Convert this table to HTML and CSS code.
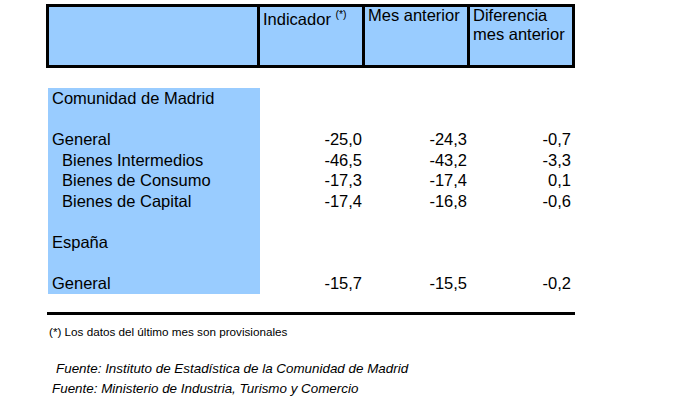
FILE: index.html
```html
<!DOCTYPE html>
<html lang="es">
<head>
<meta charset="utf-8">
<title>Indicador</title>
<link rel="stylesheet" href="styles.css">
</head>
<body>
<div class="page">
  <div class="head">
    <div class="hc"></div>
    <div class="hc ind"><div class="ht">Indicador <sup class="ast">(*)</sup></div></div>
    <div class="hc"><div class="ht">Mes anterior</div></div>
    <div class="hc"><div class="ht">Diferencia<br>mes anterior</div></div>
  </div>

  <div class="data">
    <div class="lab">Comunidad de Madrid</div><div></div><div></div><div></div>
    <div class="lab">&nbsp;</div><div></div><div></div><div></div>
    <div class="lab">General</div><div class="num">-25,0</div><div class="num">-24,3</div><div class="num">-0,7</div>
    <div class="lab sub">Bienes Intermedios</div><div class="num">-46,5</div><div class="num">-43,2</div><div class="num">-3,3</div>
    <div class="lab sub">Bienes de Consumo</div><div class="num">-17,3</div><div class="num">-17,4</div><div class="num">0,1</div>
    <div class="lab sub">Bienes de Capital</div><div class="num">-17,4</div><div class="num">-16,8</div><div class="num">-0,6</div>
    <div class="lab">&nbsp;</div><div></div><div></div><div></div>
    <div class="lab">España</div><div></div><div></div><div></div>
    <div class="lab">&nbsp;</div><div></div><div></div><div></div>
    <div class="lab">General</div><div class="num">-15,7</div><div class="num">-15,5</div><div class="num">-0,2</div>
  </div>

  <div class="rule"></div>

  <p class="note">(*) Los datos del último mes son provisionales</p>
  <p class="src src1">Fuente: Instituto de Estadística de la Comunidad de Madrid</p>
  <p class="src src2">Fuente: Ministerio de Industria, Turismo y Comercio</p>
</div>
</body>
</html>
```

FILE: styles.css
```css
html, body {
  margin: 0;
  padding: 0;
  background: #ffffff;
}

body {
  font-family: "Liberation Sans", Arial, sans-serif;
  color: #000000;
}

.page {
  padding-top: 4px;
  width: 683px;
  height: 411px;
  box-sizing: border-box;
  overflow: hidden;
}

.head {
  margin-left: 46px;
  width: 529px;
  box-sizing: border-box;
  display: grid;
  grid-template-columns: 208px 102px 102px 102px;
  grid-template-rows: 58px;
  gap: 3px;
  padding: 3px;
  background: #000000;
}

.hc {
  background: #99ccff;
  padding: 0 0 0 3px;
  font-size: 16.5px;
  line-height: 19px;
}

.hc.ind {
  padding-top: 4px;
}

.ht {
  margin-top: -1px;
  white-space: nowrap;
}

.ast {
  font-size: 10.5px;
  line-height: 0;
  vertical-align: 7px;
  margin-left: 0;
}

.data {
  margin-top: 20px;
  margin-left: 48px;
  display: grid;
  grid-template-columns: 212px 102px 105px 104px;
  grid-auto-rows: 20.6px;
  font-size: 16.5px;
  line-height: 20.6px;
  background: linear-gradient(to right, #99ccff 212px, transparent 212px);
  width: 523px;
}

.lab {
  padding-left: 4px;
  white-space: nowrap;
}

.lab.sub {
  padding-left: 14px;
}

.num {
  text-align: right;
}

.rule {
  margin-top: 18px;
  margin-left: 47px;
  width: 528px;
  height: 3px;
  background: #000000;
}

.note {
  margin: 10px 0 0 49px;
  font-size: 11.7px;
  line-height: 14px;
}

.src {
  margin: 0;
  font-style: italic;
  font-size: 13.4px;
  line-height: 20.5px;
}

.src1 {
  margin-top: 20px;
  margin-left: 56px;
}

.src2 {
  margin-left: 52px;
}
```
